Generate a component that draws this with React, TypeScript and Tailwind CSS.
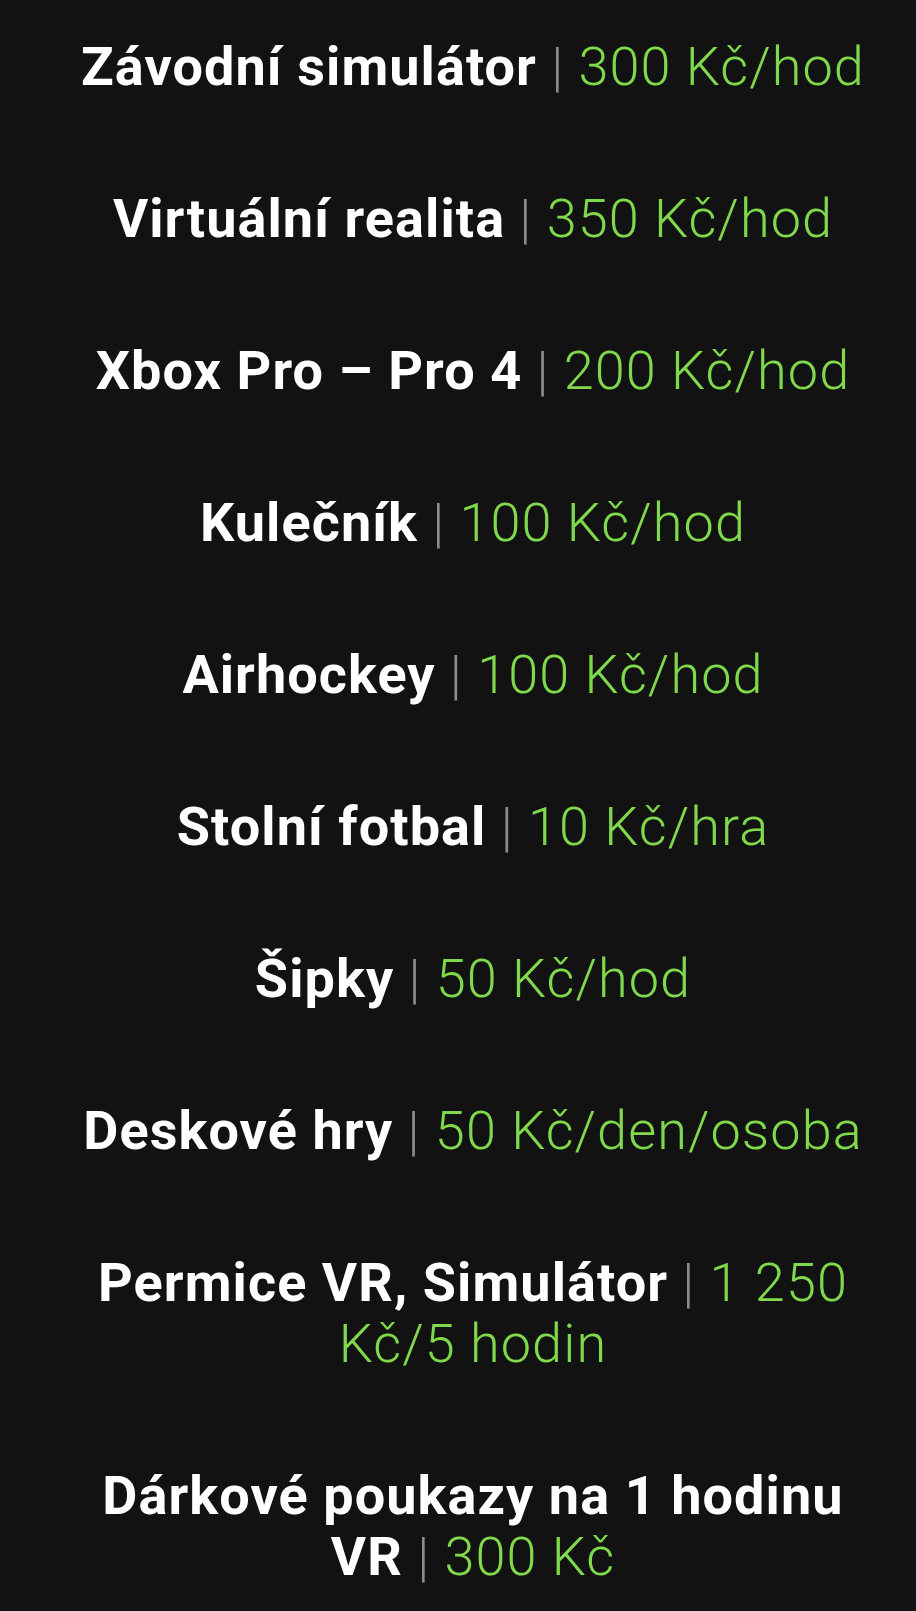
import React from 'react';

type PriceRow = {
  name: string;
  price: string;
};

const rows: PriceRow[] = [
  { name: 'Závodní simulátor', price: '300 Kč/hod' },
  { name: 'Virtuální realita', price: '350 Kč/hod' },
  { name: 'Xbox Pro – Pro 4', price: '200 Kč/hod' },
  { name: 'Kulečník', price: '100 Kč/hod' },
  { name: 'Airhockey', price: '100 Kč/hod' },
  { name: 'Stolní fotbal', price: '10 Kč/hra' },
  { name: 'Šipky', price: '50 Kč/hod' },
  { name: 'Deskové hry', price: '50 Kč/den/osoba' },
  { name: 'Permice VR, Simulátor', price: '1 250 Kč/5 hodin' },
  { name: 'Dárkové poukazy na 1 hodinu VR', price: '300 Kč' },
];

export default function App() {
  return (
    <div className="min-h-screen w-full bg-[#121212] font-['Roboto',sans-serif]">
      <div className="flex flex-col gap-[91px] pl-[70px] pr-[40px] pt-[36px] pb-[24px]">
        {rows.map(row => (
          <p key={row.name} className="text-center text-[54px] leading-[61px] tracking-[0.02em]">
            <span className="font-bold text-white">{row.name}</span>
            <span className="font-light text-[#8c8c8c]"> | </span>
            <span className="font-light text-[#7fd94b]">{row.price}</span>
          </p>
        ))}
      </div>
    </div>
  );
}
